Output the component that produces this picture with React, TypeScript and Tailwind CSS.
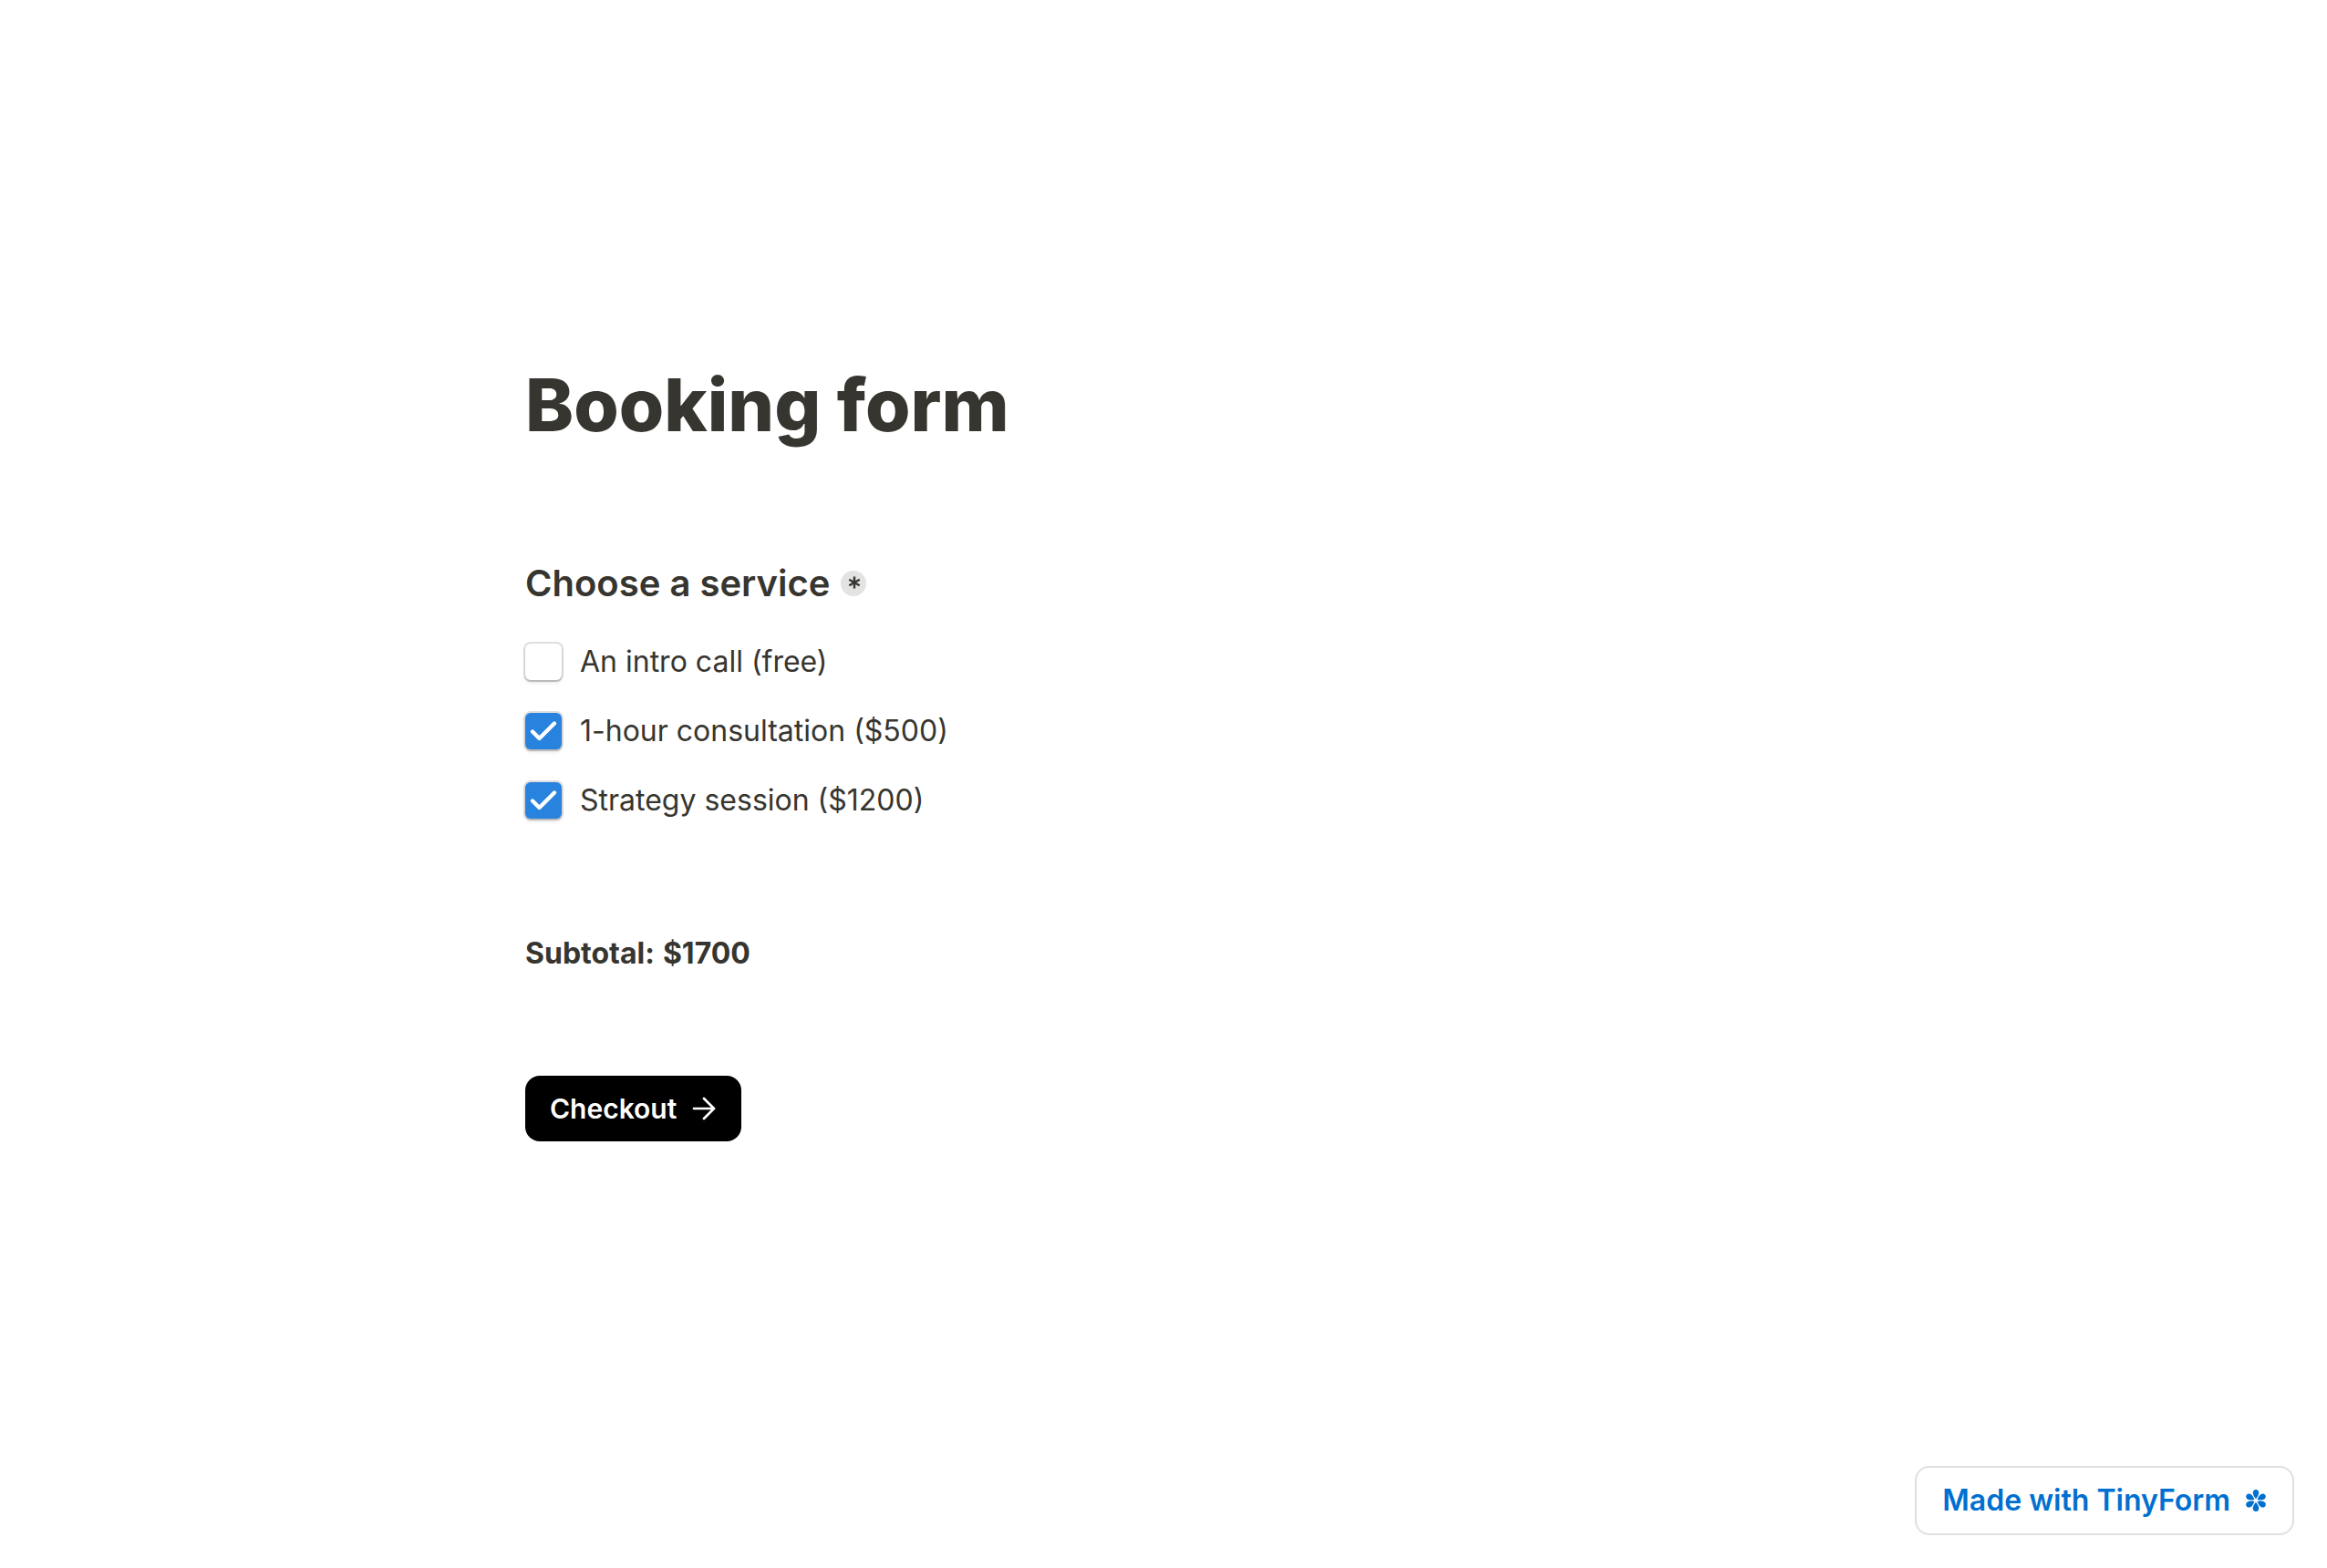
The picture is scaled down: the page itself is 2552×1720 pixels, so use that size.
import { useState } from 'react';

interface Service {
  id: string;
  label: string;
  price: number;
}

const services: Service[] = [
  { id: 'intro', label: 'An intro call (free)', price: 0 },
  { id: 'consultation', label: '1-hour consultation ($500)', price: 500 },
  { id: 'strategy', label: 'Strategy session ($1200)', price: 1200 },
];

interface ServiceOptionProps {
  service: Service;
  checked: boolean;
  onToggle: (id: string) => void;
}

function ServiceOption({ service, checked, onToggle }: ServiceOptionProps) {
  return (
    <div className="flex items-center gap-5">
      <span className="relative size-10 shrink-0">
        <input
          id={service.id}
          type="checkbox"
          checked={checked}
          onChange={() => onToggle(service.id)}
          className="peer block size-10 appearance-none rounded-md bg-white shadow-[0_0_0_2px_rgba(61,59,53,0.16),0_2px_2px_rgba(61,59,53,0.2),0_4px_4px_rgba(61,59,53,0.06)] checked:bg-[#2783de]"
        />
        <svg
          viewBox="0 0 40 40"
          fill="none"
          stroke="currentColor"
          strokeWidth="4.4"
          strokeLinecap="round"
          strokeLinejoin="round"
          className="pointer-events-none absolute inset-0 hidden size-10 text-white peer-checked:block"
        >
          <path d="M8 20.5l7.5 7.5L32 11.5" />
        </svg>
      </span>
      <label htmlFor={service.id} className="text-[32px] leading-11">
        {service.label}
      </label>
    </div>
  );
}

function FlowerIcon() {
  return (
    <svg viewBox="0 0 24 24" fill="currentColor" className="size-6">
      {[0, 60, 120, 180, 240, 300].map((angle) => (
        <path
          key={angle}
          transform={`rotate(${angle} 12 12)`}
          d="M12 10.2C10.8 8.7 8.7 6 8.7 3.6C8.7 1.5 10.1 0 12 0s3.3 1.5 3.3 3.6C15.3 6 13.2 8.7 12 10.2z"
        />
      ))}
    </svg>
  );
}

export default function App() {
  const [selected, setSelected] = useState<string[]>(['consultation', 'strategy']);

  const toggle = (id: string) => {
    setSelected((prev) => (prev.includes(id) ? prev.filter((s) => s !== id) : [...prev, id]));
  };

  const subtotal = services
    .filter((service) => selected.includes(service.id))
    .reduce((sum, service) => sum + service.price, 0);

  return (
    <div className="flex min-h-screen flex-col bg-white font-[Inter,sans-serif] text-[#37352f]">
      <main className="mx-auto w-full max-w-[1400px] flex-1 pt-99">
        <h1 className="text-[80px] leading-24 font-extrabold">Booking form</h1>

        <form onSubmit={(e) => e.preventDefault()} className="mt-31">
          <fieldset>
            <legend className="flex items-center gap-3 text-[40px] leading-12 font-semibold">
              Choose a service
              <span className="flex size-7 items-center justify-center rounded-full bg-[#e3e3e2]">
                <svg
                  viewBox="0 0 28 28"
                  fill="none"
                  stroke="currentColor"
                  strokeWidth="2.4"
                  className="size-7"
                >
                  <path d="M15 6.5v13M9.3 9.8l11.4 6.4M20.7 9.8L9.3 16.2" />
                </svg>
              </span>
            </legend>
            <div className="mt-10 space-y-8">
              {services.map((service) => (
                <ServiceOption
                  key={service.id}
                  service={service}
                  checked={selected.includes(service.id)}
                  onToggle={toggle}
                />
              ))}
            </div>
          </fieldset>

          <p className="mt-31 text-[32px] leading-11">
            <strong>Subtotal:</strong> <strong>${subtotal}</strong>
          </p>

          <button
            type="submit"
            className="mt-28 flex h-18 items-center gap-4 rounded-2xl bg-black px-[27px] text-[30px] font-semibold text-white"
          >
            Checkout
            <svg
              viewBox="0 0 28 28"
              fill="none"
              stroke="currentColor"
              strokeWidth="2.7"
              strokeLinecap="round"
              strokeLinejoin="round"
              className="size-7"
            >
              <path d="M3 14h22M14 3l11 11-11 11" />
            </svg>
          </button>
        </form>
      </main>

      <footer className="flex justify-end p-9">
        <a
          href="#"
          className="flex h-19 items-center gap-4 rounded-2xl border-2 border-[#e0e0e0] px-7 text-[32px] font-semibold text-[#0070d0]"
        >
          Made with TinyForm
          <FlowerIcon />
        </a>
      </footer>
    </div>
  );
}
